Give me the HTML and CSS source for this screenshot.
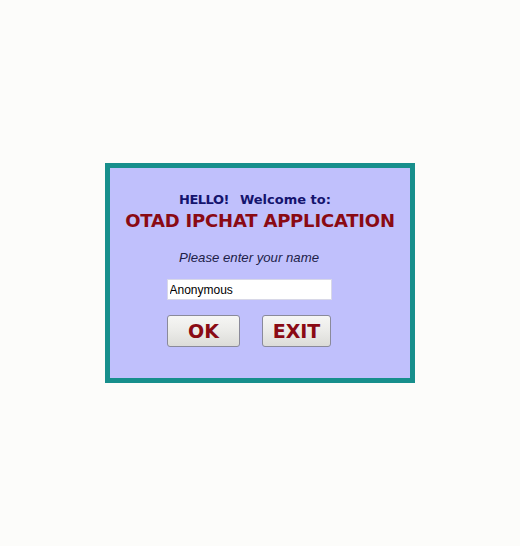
FILE: index.html
```html
<!DOCTYPE html>
<html>
<head>
<meta charset="utf-8">
<link rel="stylesheet" href="styles.css">
</head>
<body>
<div class="page">
  <div class="dialog">
    <div class="greeting"><span>HELLO!</span><span>Welcome to:</span></div>
    <div class="title">OTAD IPCHAT APPLICATION</div>
    <div class="form">
      <div class="prompt">Please enter your name</div>
      <input class="name" type="text" value="Anonymous">
      <div class="buttons">
        <button class="btn btn-ok">OK</button>
        <button class="btn btn-exit">EXIT</button>
      </div>
    </div>
  </div>
</div>
</body>
</html>
```
FILE: styles.css
```css
html, body {
  margin: 0;
  padding: 0;
  background: #fcfcfa;
}
.page {
  width: 520px;
  height: 546px;
  display: flex;
  align-items: center;
  justify-content: center;
}
.dialog {
  box-sizing: border-box;
  width: 310px;
  height: 220px;
  border: 5px solid #178f8c;
  background: #c0c0fc;
  display: flex;
  flex-direction: column;
  align-items: center;
  padding-top: 24px;
}
.greeting {
  font-family: "DejaVu Sans", sans-serif;
  font-weight: bold;
  font-size: 13px;
  color: #14146e;
  display: flex;
  gap: 11px;
  margin-right: 10px;
  line-height: 16px;
}
.greeting span:first-child {
  letter-spacing: -0.5px;
}
.title {
  font-family: "DejaVu Sans", sans-serif;
  font-weight: bold;
  font-size: 18px;
  color: #8a0a14;
  line-height: 22px;
  margin-top: 2px;
  letter-spacing: -0.2px;
}
.form {
  display: flex;
  flex-direction: column;
  align-items: center;
  margin-right: 22px;
}
.prompt {
  font-family: "Liberation Sans", Arial, sans-serif;
  font-style: italic;
  font-size: 13.2px;
  color: #202048;
  margin-top: 17px;
  line-height: 18px;
}
.name {
  box-sizing: border-box;
  width: 165px;
  height: 21px;
  margin-top: 12px;
  border: 1px solid #d8d8e8;
  background: #ffffff;
  font-family: "Liberation Sans", Arial, sans-serif;
  font-size: 12px;
  color: #000;
  padding: 1px 2px 0;
  outline: none;
}
.buttons {
  display: flex;
  gap: 22px;
  margin-top: 15px;
}
.btn {
  box-sizing: border-box;
  height: 32px;
  border: 1px solid #8a8a9a;
  border-radius: 3px;
  background: linear-gradient(#f6f6f4 0%, #ebebe8 50%, #dcdcd8 100%);
  font-family: "DejaVu Sans", sans-serif;
  font-weight: bold;
  font-size: 19px;
  color: #8a0a14;
  padding: 0;
  line-height: 30px;
}
.btn-ok { width: 73px; }
.btn-exit { width: 69px; }
```
